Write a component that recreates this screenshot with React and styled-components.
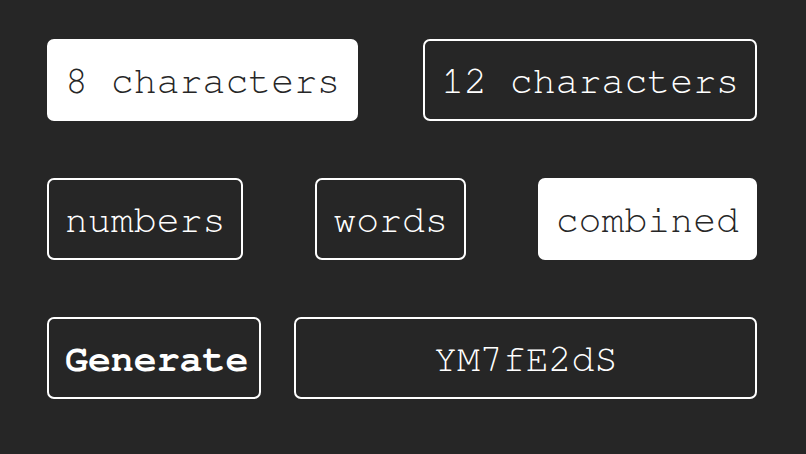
import styled, { createGlobalStyle } from 'styled-components';

const GlobalStyle = createGlobalStyle`
  html, body {
    margin: 0;
    padding: 0;
    background: #262626;
  }
`;

const Page = styled.div`
  display: flex;
  flex-direction: column;
  gap: 57px;
  box-sizing: border-box;
  width: 806px;
  height: 454px;
  padding: 39px 49px 0 47px;
  background: #262626;
  font-family: "Nimbus Mono PS", "FreeMono", "Liberation Mono", "Courier New", monospace;
`;

const Row = styled.div`
  display: flex;
  justify-content: space-between;
  gap: ${(p) => (p.$tight ? '33px' : '0')};
`;

const Option = styled.button`
  box-sizing: border-box;
  height: 82px;
  padding: 19px 16px 15px;
  border: 2px solid #fff;
  border-radius: 7px;
  background: ${(p) => (p.$active ? '#fff' : '#262626')};
  color: ${(p) => (p.$active ? '#262626' : '#fff')};
  font-family: inherit;
  font-size: 38.2px;
  line-height: 44px;
  white-space: nowrap;
  cursor: pointer;
`;

const GenerateButton = styled(Option)`
  padding: 19px 11px 15px 16px;
  font-weight: 700;
`;

const Output = styled.div`
  flex: 1;
  box-sizing: border-box;
  height: 82px;
  padding: 19px 16px 15px;
  border: 2px solid #fff;
  border-radius: 7px;
  color: #fff;
  font-size: 38.2px;
  line-height: 44px;
  text-align: center;
`;

const App = () => {
  return (
    <>
      <GlobalStyle />
      <Page>
        <Row>
          <Option $active>8 characters</Option>
          <Option>12 characters</Option>
        </Row>
        <Row>
          <Option>numbers</Option>
          <Option>words</Option>
          <Option $active>combined</Option>
        </Row>
        <Row $tight>
          <GenerateButton>Generate</GenerateButton>
          <Output>YM7fE2dS</Output>
        </Row>
      </Page>
    </>
  );
};

export default App;
